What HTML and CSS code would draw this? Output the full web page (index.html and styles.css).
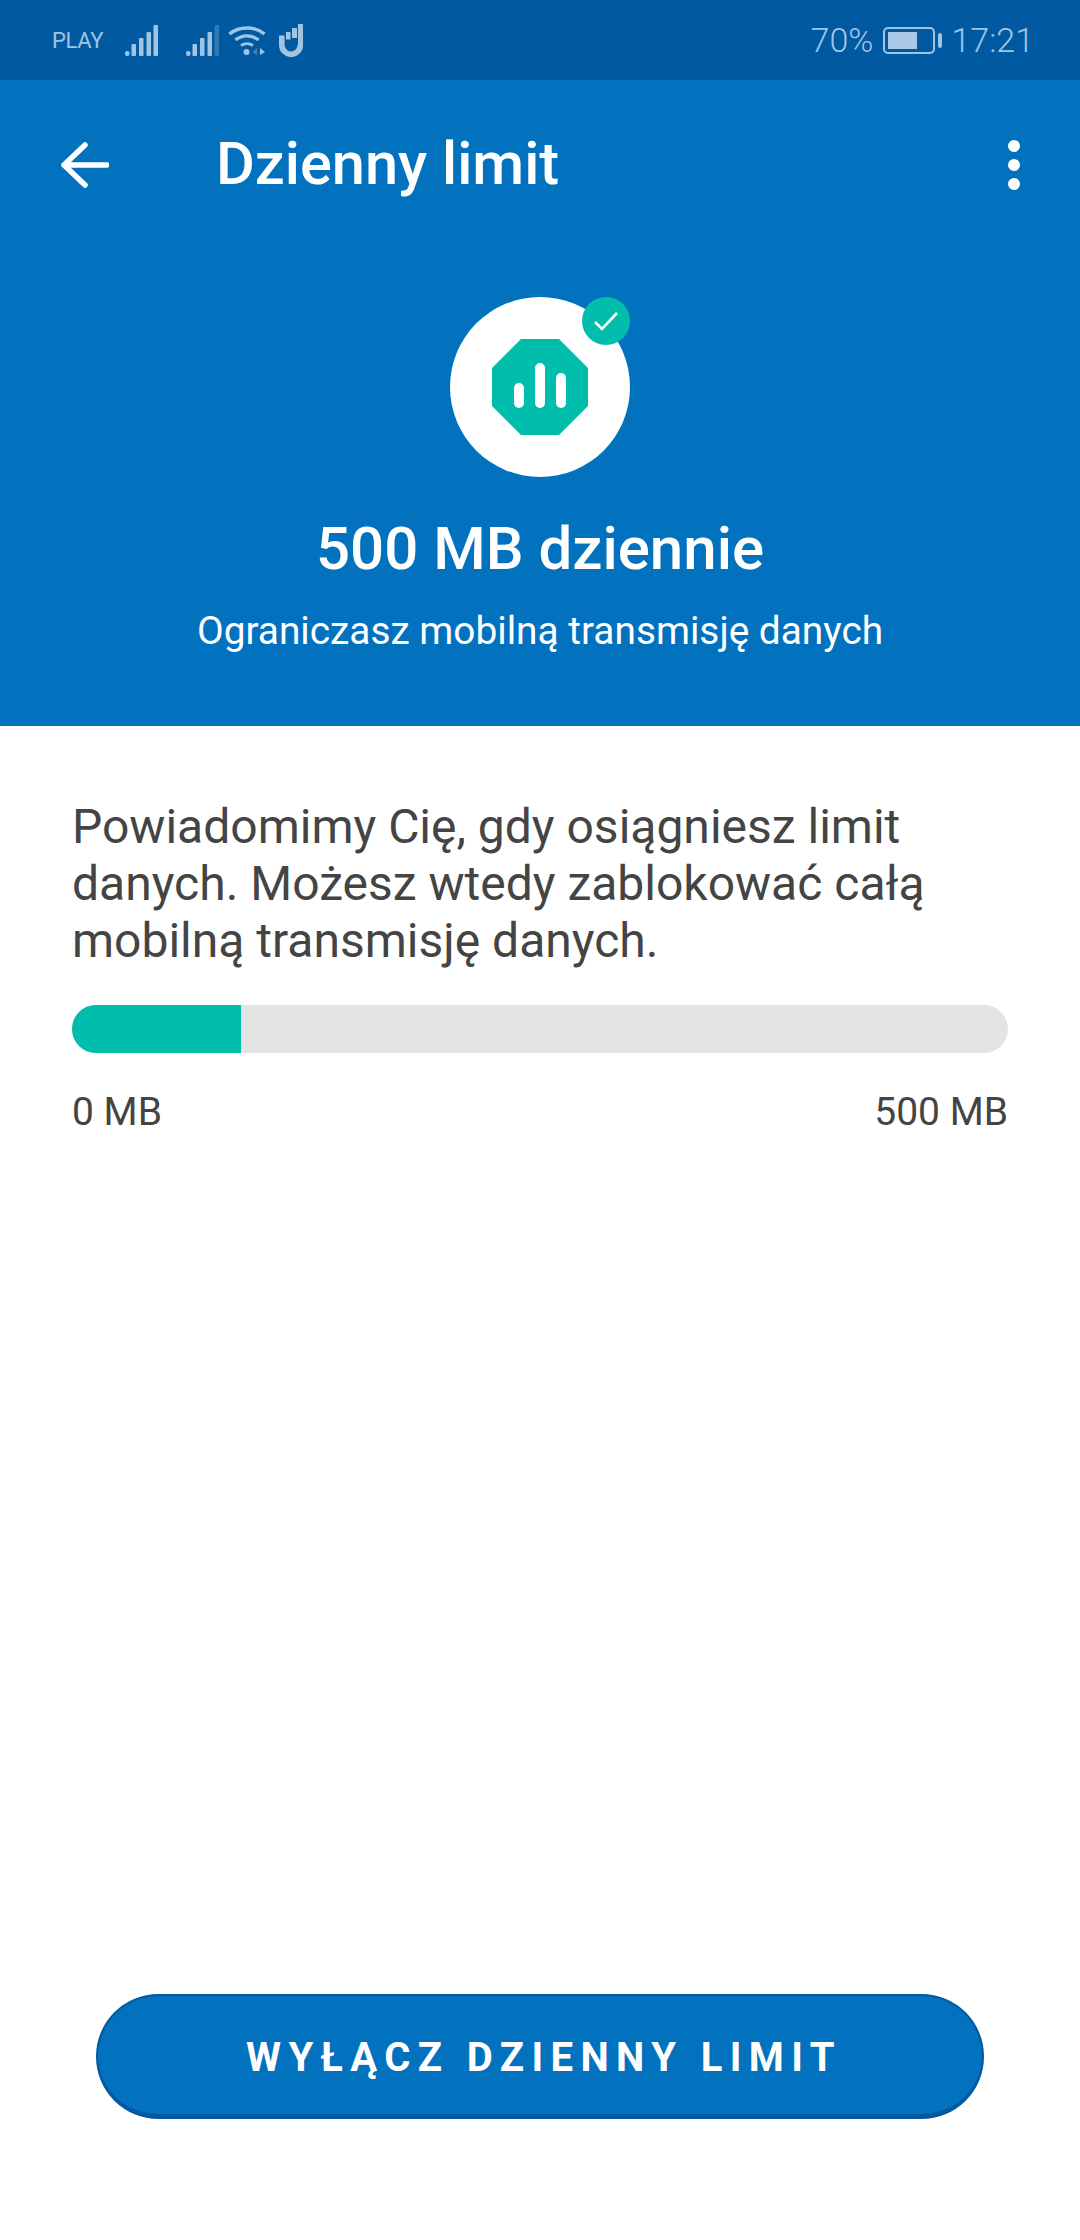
FILE: index.html
```html
<!DOCTYPE html>
<html lang="pl">
<head>
<meta charset="UTF-8" />
<meta name="viewport" content="width=device-width, initial-scale=1" />
<title>Dzienny limit</title>
<link rel="stylesheet" href="styles.css">
</head>
<body>

<div class="status-bar">
  <div class="status-left">
    <span class="carrier">PLAY</span>
    <svg class="signal signal-one" width="33" height="31" viewBox="0 0 33 31">
      <rect x="0" y="26" width="4.500" height="5" rx="2" />
      <rect x="6.500" y="19" width="4.500" height="12" rx="1" />
      <rect x="14" y="13" width="4.500" height="18" rx="1" />
      <rect x="21.500" y="7" width="4.500" height="24" rx="1" />
      <rect x="28.500" y="0" width="4.500" height="31" rx="1" />
    </svg>
    <svg class="signal signal-two" width="33" height="31" viewBox="0 0 33 31">
      <rect x="0" y="26" width="4.500" height="5" rx="2" />
      <rect x="6.500" y="19" width="4.500" height="12" rx="1" />
      <rect x="14" y="13" width="4.500" height="18" rx="1" />
      <rect x="21.500" y="7" width="4.500" height="24" rx="1" />
      <rect x="28.500" y="0" width="4.500" height="31" rx="1" opacity="0.3" />
    </svg>
    <svg class="wifi" width="38" height="31" viewBox="0 0 38 31" fill="none">
      <path d="M1.500 9 C11 1 27 1 36.500 9" stroke-width="3.400" />
      <path d="M7.500 15 C14 9.500 24 9.500 30.500 15" stroke-width="3.400" />
      <path d="M13 20.500 C16.500 18 21.500 18 25 20.500" stroke-width="3" />
      <circle class="fill" cx="18.500" cy="27" r="3" />
      <path class="fill" d="M32 23 L37 27 L32 30 Z" />
      <path class="fill dim" d="M29 23 L24.500 27 L29 30 Z" />
    </svg>
    <svg class="hand" width="24" height="33" viewBox="0 0 24 33" fill="none">
      <path d="M2.800 11.500 V21 A9.300 9.300 0 0 0 21.400 21" stroke="#a0c5e4" stroke-width="5.600" />
      <rect class="fill" x="7" y="8" width="4.500" height="7.500" />
      <rect class="fill" x="13" y="4" width="5" height="10" />
      <rect class="fill" x="19" y="0" width="5" height="21" />
    </svg>
  </div>
  <div class="status-right">
    <span>70%</span>
    <div class="battery"><div class="battery-level"></div></div>
    <div class="battery-nub"></div>
    <span class="clock">17:21</span>
  </div>
</div>

<div class="hero">
  <div class="toolbar">
    <svg class="back" width="49" height="46" viewBox="0 0 49 46" fill="none">
      <path d="M25 3 L4 23 L25 43 M4 23 H47" stroke="#fff" stroke-width="5.500" stroke-linecap="round" stroke-linejoin="round" />
    </svg>
    <h1>Dzienny limit</h1>
    <div class="menu"><i></i><i></i><i></i></div>
  </div>

  <div class="limit-icon">
    <svg width="96" height="96" viewBox="0 0 96 96">
      <path d="M29 0 H67 L96 29 V67 L67 96 H29 L0 67 V29 Z" fill="#00bdac" />
      <rect x="22" y="44" width="10" height="25" rx="5" fill="#fff" />
      <rect x="43" y="24" width="10" height="45" rx="5" fill="#fff" />
      <rect x="64" y="34" width="10" height="35" rx="5" fill="#fff" />
    </svg>
    <div class="badge">
      <svg width="26" height="22" viewBox="0 0 26 22" fill="none">
        <path d="M2 12 L9 19 L24 3" stroke="#fff" stroke-width="2.600" />
      </svg>
    </div>
  </div>

  <h2>500 MB dziennie</h2>
  <p class="hero-sub">Ograniczasz mobilną transmisję danych</p>
</div>

<div class="content">
  <p class="info">Powiadomimy Cię, gdy osiągniesz limit danych. Możesz wtedy zablokować całą mobilną transmisję danych.</p>
  <div class="progress"><div class="progress-fill" style="width: 18.1%"></div></div>
  <div class="progress-labels">
    <span>0 MB</span>
    <span>500 MB</span>
  </div>
  <button class="off-btn">WYŁĄCZ DZIENNY LIMIT</button>
</div>

</body>
</html>
```

FILE: styles.css
```css
* {
  box-sizing: border-box;
}
body {
  margin: 0;
  height: 2240px;
  display: flex;
  flex-direction: column;
  background: #fff;
  font-family: Roboto, "Liberation Sans", sans-serif;
  overflow: hidden;
}
.status-bar {
  height: 80px;
  background: #0059a1;
  color: #a0c5e4;
  display: flex;
  justify-content: space-between;
  align-items: center;
  padding: 0 46px 0 52px;
}
.status-left {
  display: flex;
  align-items: center;
}
.carrier {
  font-size: 22px;
  width: 73px;
  letter-spacing: -0.3px;
}
.signal rect,
.fill {
  fill: #a0c5e4;
}
.wifi path {
  stroke: #a0c5e4;
}
.wifi .fill {
  stroke: none;
}
.wifi .dim {
  opacity: 0.4;
}
.signal-two {
  margin-left: 28px;
}
.wifi {
  margin-left: 9px;
}
.hand {
  margin-left: 13px;
}
.status-right {
  display: flex;
  align-items: center;
  font-size: 34px;
  font-weight: 300;
}
.battery {
  width: 52px;
  height: 27px;
  margin-left: 10px;
  border: 2px solid #a0c5e4;
  border-radius: 5px;
  padding: 3px;
}
.battery-level {
  width: 29px;
  height: 100%;
  background: #a9c9e4;
}
.battery-nub {
  width: 4px;
  height: 15px;
  margin-left: 3px;
  border-radius: 2px;
  background: #a0c5e4;
}
.clock {
  margin-left: 9px;
}
.hero {
  height: 646px;
  background: #0272bf;
  color: #fff;
  display: flex;
  flex-direction: column;
  align-items: center;
}
.toolbar {
  align-self: stretch;
  height: 170px;
  display: flex;
  align-items: center;
  padding: 0 60px;
}
.toolbar h1 {
  margin: 0 0 0 107px;
  padding-bottom: 3px;
  font-size: 59.500px;
  font-weight: 500;
  flex: 1;
}
.menu {
  display: flex;
  flex-direction: column;
  gap: 7px;
}
.menu i {
  width: 12px;
  height: 12px;
  border-radius: 50%;
  background: #fff;
}
.limit-icon {
  position: relative;
  width: 180px;
  height: 180px;
  margin-top: 47px;
  border-radius: 50%;
  background: #fff;
  display: flex;
  align-items: center;
  justify-content: center;
}
.badge {
  position: absolute;
  top: 0;
  right: 0;
  width: 48px;
  height: 48px;
  border-radius: 50%;
  background: #00bdac;
  display: flex;
  align-items: center;
  justify-content: center;
}
.hero h2 {
  margin: 37px 0 0;
  font-size: 60px;
  font-weight: 500;
  line-height: 70px;
}
.hero-sub {
  margin: 25px 0 0;
  font-size: 38.800px;
  line-height: 44px;
}
.content {
  flex: 1;
  display: flex;
  flex-direction: column;
  padding: 72px 72px 121px;
  color: #444;
}
.info {
  margin: 0;
  font-size: 48px;
  line-height: 57px;
}
.progress {
  height: 48px;
  margin-top: 36px;
  border-radius: 24px;
  background: #e4e4e4;
  overflow: hidden;
}
.progress-fill {
  height: 100%;
  background: #00bdac;
}
.progress-labels {
  display: flex;
  justify-content: space-between;
  margin-top: 37px;
  font-size: 39px;
  line-height: 44px;
}
.off-btn {
  margin: auto 24px 0;
  height: 125px;
  padding: 5px 0 0 8px;
  border: 2px solid #0059a1;
  border-bottom-width: 5px;
  border-radius: 63px;
  background: #0272bf;
  color: #fff;
  font-family: inherit;
  font-size: 40px;
  font-weight: 700;
  letter-spacing: 7.400px;
}
```
